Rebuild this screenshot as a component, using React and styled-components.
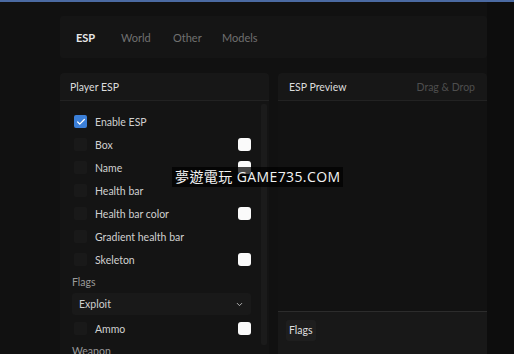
import React from "react";
import styled, { createGlobalStyle } from "styled-components";
import { ChevronDown, Check } from "lucide-react";

const GlobalStyle = createGlobalStyle`
  html, body {
    margin: 0;
    padding: 0;
    background: #0e0e0e;
    font-family: Lato, "Noto Sans", sans-serif;
  }
`;

const Page = styled.div`
  position: relative;
  height: 354px;
  overflow: hidden;
  display: flex;
  flex-direction: column;
`;

const TopLine = styled.div`
  height: 2px;
  background: #4b6aa2;
  flex-shrink: 0;
`;

const Main = styled.div`
  flex: 1;
  display: flex;
  min-height: 0;
`;

const Content = styled.div`
  width: 427px;
  padding: 14px 0 0 60px;
  background: #111111;
  display: flex;
  flex-direction: column;
`;

const SideStrip = styled.div`
  flex: 1;
  background: #0d0d0d;
`;

const TabBar = styled.div`
  height: 42px;
  flex-shrink: 0;
  background: #151515;
  border-radius: 3px;
  display: grid;
  grid-template-columns: 45px 52px 49px auto;
  align-items: center;
  padding-left: 16px;
  font-size: 11px;
`;

const Tab = styled.span`
  color: ${(p) => (p.active ? "#e8e8e8" : "#707070")};
  font-weight: ${(p) => (p.active ? 700 : 400)};
`;

const Columns = styled.div`
  margin-top: 15px;
  display: grid;
  grid-template-columns: 209px 209px;
  gap: 9px;
  flex: 1;
  min-height: 0;
`;

const Panel = styled.div`
  background: ${(p) => p.bg || "#141414"};
  border-radius: 4px 4px 0 0;
  display: flex;
  flex-direction: column;
  overflow: hidden;
  min-height: 0;
`;

const PanelHeader = styled.div`
  height: 27px;
  flex-shrink: 0;
  background: #171717;
  border-bottom: 1px solid #222;
  display: flex;
  align-items: center;
  justify-content: space-between;
  padding: 0 12px 0 ${(p) => p.pl || 10}px;
  font-size: 10.5px;
  color: #dcdcdc;
`;

const HeaderHint = styled.span`
  color: #4e4e4e;
`;

const PanelBody = styled.div`
  flex: 1;
  display: flex;
  min-height: 0;
  overflow: hidden;
`;

const List = styled.div`
  flex: 1;
  padding: 9px 0 0 12px;
  display: flex;
  flex-direction: column;
`;

const Scrollbar = styled.div`
  width: 6px;
  margin: 3px 2px 0 4px;
  background: #1b1b1b;
  border-radius: 2px;
  height: 241px;
  flex-shrink: 0;
`;

const Row = styled.div`
  height: 23px;
  flex-shrink: 0;
  display: flex;
  align-items: center;
  padding: 0 6px 0 2px;
`;

const Box = styled.div`
  width: 13px;
  height: 13px;
  border-radius: 2px;
  background: ${(p) => (p.checked ? "#3b7fd8" : "#191919")};
  display: flex;
  align-items: center;
  justify-content: center;
  flex-shrink: 0;
`;

const Label = styled.span`
  margin-left: 8px;
  font-size: 10.5px;
  color: #d0d0d0;
  flex: 1;
`;

const Swatch = styled.div`
  width: 13px;
  height: 13px;
  border-radius: 3px;
  background: #fafafa;
`;

const SectionLabel = styled.div`
  height: 22px;
  flex-shrink: 0;
  display: flex;
  align-items: center;
  font-size: 10.5px;
  color: #9a9a9a;
`;

const Select = styled.div`
  height: 22px;
  flex-shrink: 0;
  width: 179px;
  background: #191919;
  border-radius: 3px;
  display: flex;
  align-items: center;
  justify-content: space-between;
  padding: 0 7px 0 7px;
  box-sizing: border-box;
  font-size: 10.5px;
  color: #cfcfcf;
  margin-bottom: 2px;
`;

const Preview = styled.div`
  flex: 1;
  background: #121212;
`;

const PreviewFooter = styled.div`
  height: 43px;
  box-sizing: border-box;
  flex-shrink: 0;
  border-top: 1px solid #2c2c2c;
  background: #181818;
  padding: 6px 0 0 8px;
`;

const Chip = styled.span`
  display: inline-block;
  background: #1e1e1e;
  border-radius: 3px;
  padding: 4px 3px 5px;
  font-size: 10.5px;
  color: #dedede;
`;

const Watermark = styled.div`
  position: absolute;
  left: 172px;
  top: 167px;
  height: 20px;
  padding: 0 3px;
  background: rgba(0, 0, 0, 0.72);
  color: #f2f2f2;
  font-family: "Open Sans", "Noto Sans CJK TC", sans-serif;
  font-size: 14px;
  letter-spacing: 0.4px;
  line-height: 20px;
  white-space: nowrap;
`;

const options = [
  { name: "Enable ESP", checked: true },
  { name: "Box", color: true },
  { name: "Name", color: true },
  { name: "Health bar" },
  { name: "Health bar color", color: true },
  { name: "Gradient health bar" },
  { name: "Skeleton", color: true },
];

const OptionRow = ({ name, checked, color }) => (
  <Row>
    <Box checked={checked}>
      {checked && <Check size={10} color="#fff" strokeWidth={3} />}
    </Box>
    <Label>{name}</Label>
    {color && <Swatch />}
  </Row>
);

export default function App() {
  return (
    <Page>
      <GlobalStyle />
      <TopLine />
      <Main>
        <Content>
          <TabBar>
            <Tab active>ESP</Tab>
            <Tab>World</Tab>
            <Tab>Other</Tab>
            <Tab>Models</Tab>
          </TabBar>
          <Columns>
            <Panel>
              <PanelHeader>Player ESP</PanelHeader>
              <PanelBody>
                <List>
                  {options.map((o) => (
                    <OptionRow key={o.name} {...o} />
                  ))}
                  <SectionLabel>Flags</SectionLabel>
                  <Select>
                    Exploit
                    <ChevronDown size={9} color="#bbb" strokeWidth={2.5} />
                  </Select>
                  <OptionRow name="Ammo" color />
                  <SectionLabel>Weapon</SectionLabel>
                </List>
                <Scrollbar />
              </PanelBody>
            </Panel>
            <Panel bg="#121212">
              <PanelHeader pl={11}>
                ESP Preview
                <HeaderHint>Drag &amp; Drop</HeaderHint>
              </PanelHeader>
              <Preview />
              <PreviewFooter>
                <Chip>Flags</Chip>
              </PreviewFooter>
            </Panel>
          </Columns>
        </Content>
        <SideStrip />
      </Main>
      <Watermark>夢遊電玩 GAME735.COM</Watermark>
    </Page>
  );
}
